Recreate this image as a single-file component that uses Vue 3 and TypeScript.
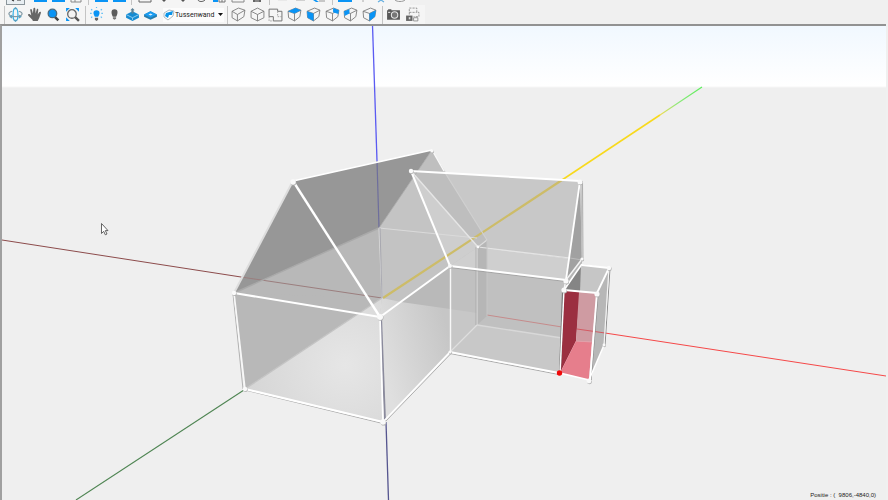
<script setup lang="ts">
import { ref } from 'vue'

interface Shape {
  d: string
  fill?: string
  stroke?: string
  width?: number
  dash?: string
}
interface Tool {
  label: string
  shapes: Shape[]
}
interface Stub extends Tool {
  w: number
}
interface Face {
  points: string
  fill: string
}
interface Line {
  from: [number, number]
  to: [number, number]
  stroke: string
  width: number
}

const blue = '#0a94f5'
const dark = '#555555'
const line = '#777777'

const cube = 'M1 4 8 1 13 3 7 6ZM1 4 1.500 10 7 13 12 9 13 3M7 6V13'
const cubeTool = (label: string, d: string): Tool => ({
  label,
  shapes: [
    { d: cube, stroke: line, width: 0.8 },
    { d, fill: blue },
  ],
})

const navigation: Tool[] = [
  {
    label: 'Draaien',
    shapes: [
      { d: 'M7 1C4 1 4 13 7 13S10 1 7 1', stroke: '#2fb0e8', width: 1.1 },
      { d: 'M4 4C-1 5 0 9 7 9S15 5 10 4', stroke: '#8299a5', width: 1.1 },
      { d: 'M5 2 7 0 9 2ZM5 12 7 14 9 12ZM1 9 4 7 4 11ZM13 9 10 7 10 11Z', fill: '#5e9fbe' },
    ],
  },
  {
    label: 'Verschuiven',
    shapes: [{
      d: 'M5 12 1.500 8.500C0 7 1.500 6 3 7L4 8 3 3C3 1.500 4.500 1.500 4.700 3L5.500 6 6 1.500C6 .3 7.700 .3 7.700 1.500L8 6 9 2.500C9.300 1.200 10.700 1.500 10.500 3L10 7 11.300 5C12 4 13.300 4.500 13 5.500L11.500 10 10 13H5.500Z',
      fill: '#666666',
    }],
  },
  {
    label: 'Zoomen',
    shapes: [
      { d: 'M8 9 11.500 12.500', stroke: '#444444', width: 2.4 },
      { d: 'M6 2A4 4 0 1 0 6 10A4 4 0 1 0 6 2', fill: blue, stroke: '#4b6c80', width: 1.2 },
    ],
  },
  {
    label: 'Alles tonen',
    shapes: [
      { d: 'M1 1H4.500L1 4.500ZM13 1V4.500L9.500 1ZM1 13V9.500L4.500 13Z', fill: blue },
      { d: 'M9 9 13 13', stroke: '#555555', width: 2.2 },
      { d: 'M6.500 2.500A4 4 0 1 0 6.500 10.500A4 4 0 1 0 6.500 2.500', fill: '#f3f3f3', stroke: '#666666', width: 1.2 },
    ],
  },
]

const display: Tool[] = [
  {
    label: 'Licht aan',
    shapes: [
      { d: 'M7 3C3 3 4 7 5.500 9H8.500C10 7 11 3 7 3', fill: blue },
      { d: 'M7 0V1M2 2 3 3M12 2 11 3M1 6H2.500M11.500 6H13M2 10 3 9M12 10 11 9', stroke: '#63bff5', width: 1.1 },
      { d: 'M5.500 10H8.500V12L7 13 5.500 12Z', fill: '#666666' },
    ],
  },
  {
    label: 'Licht uit',
    shapes: [
      { d: 'M7 2C3 2 4 6.500 5.500 9H8.500C10 6.500 11 2 7 2', fill: '#5c5c5c' },
      { d: 'M5.500 9.500H8.500V11L7 12 5.500 11Z', fill: '#777777' },
    ],
  },
  {
    label: 'Verdieping boven',
    shapes: [
      { d: 'M1 7 7 4 13 7V10L7 13 1 10Z', fill: '#168bd2' },
      { d: 'M1 7 7 10 13 7M7 10V12', stroke: '#8dccf0', width: 0.9 },
      { d: 'M6 3H5L7 1 9 3H8V6H6Z', fill: '#5d8398' },
    ],
  },
  {
    label: 'Verdieping',
    shapes: [
      { d: 'M1 7 7 4 13 7V9L7 12 1 9Z', fill: '#257cad' },
      { d: 'M1 7 7 10 13 7 7 4Z', fill: '#199bf0' },
      { d: 'M5 7 7 6 9 7 7 8Z', fill: '#d7eefb' },
    ],
  },
]

const views: Tool[] = [
  { label: 'Perspectief', shapes: [{ d: 'M1 4 7 1 13 3 12 9 6 13 1 10ZM1 4 6 7 13 3M6 7V13', stroke: line, width: 0.8 }] },
  { label: 'Isometrisch', shapes: [{ d: 'M1 4 7 1 13 4V10L7 13 1 10ZM1 4 7 7 13 4M7 7V13', stroke: line, width: 0.8 }] },
  {
    label: 'Plattegrond',
    shapes: [
      { d: 'M1 9V2H9V4H13V13H5V9Z', stroke: '#707070', width: 0.9 },
      { d: 'M1 9V13H5M9 4V9H13', stroke: '#999999', width: 0.8, dash: '1.5 1' },
    ],
  },
  cubeTool('Bovenaanzicht', 'M1 4 8 1 13 3 7 6Z'),
  cubeTool('Vooraanzicht', 'M1 4 7 6V13L1.500 10Z'),
  cubeTool('Achteraanzicht', 'M7.500 2 8 1 13 3 12.500 6.500 7.500 5Z'),
  cubeTool('Linkeraanzicht', 'M1 4 6 2V6L1.500 8.500Z'),
  cubeTool('Rechteraanzicht', 'M7 6 13 3 12 9 7 13Z'),
]

const capture: Tool[] = [
  {
    label: 'Foto',
    shapes: [
      { d: 'M1 3H2V2H5V3H13V12H1Z', fill: '#595959' },
      { d: 'M8 4.500A3 3 0 1 0 8 10.500A3 3 0 1 0 8 4.500', fill: '#777777', stroke: '#e4e4e4', width: 1 },
      { d: 'M2 5H4', stroke: '#e4e4e4', width: 1 },
    ],
  },
  {
    label: 'Foto van plattegrond',
    shapes: [
      { d: 'M4 7V1H11V5H13V9H8M4 5H11', stroke: '#888888', width: 0.8, dash: '2 1' },
      { d: 'M1 8H7V13H1Z', fill: '#666666' },
      { d: 'M3.500 9.500H5V11.500H3.500Z', fill: '#dddddd' },
      { d: 'M8 10H12V13H8Z', stroke: '#888888', width: 0.8 },
    ],
  },
]

// Visible lower edges of the scrolled toolbar row.
const upper: Stub[][] = [
  [
    { label: 'Selecteren', w: 19, shapes: [{ d: 'M3 0 5 1M8 0H12', stroke: '#333333', width: 1.2 }] },
    { label: 'Openen', w: 18, shapes: [{ d: 'M1 0H14V2H1Z', fill: blue }] },
    { label: 'Opslaan', w: 18, shapes: [{ d: 'M1 0H14V2H1Z', fill: blue }] },
    { label: 'Afdrukken', w: 18, shapes: [{ d: 'M2 0V2H12V0M6 0V2', stroke: '#888888', width: 1 }] },
  ],
  [
    { label: 'Ongedaan maken', w: 18, shapes: [{ d: 'M1 0H14V2H1Z', fill: blue }] },
    { label: 'Opnieuw', w: 18, shapes: [{ d: 'M1 0H14V2H1Z', fill: blue }] },
  ],
  [
    { label: 'Vlak', w: 20, shapes: [{ d: 'M1 0V2H13V0', stroke: '#666666', width: 1 }] },
    { label: 'Omlaag', w: 18, shapes: [{ d: 'M5 0 7 2 9 0', fill: dark }] },
    { label: 'Verlagen', w: 19, shapes: [{ d: 'M5 0 7 2 9 0', fill: dark }] },
    { label: 'Roteren', w: 18, shapes: [{ d: 'M4 0C5 2 9 2 11 0', stroke: '#555555', width: 1 }] },
    { label: 'Spiegelen', w: 19, shapes: [{ d: 'M0 0H5V2H0Z', fill: blue }, { d: 'M6 0V2H12V0M9 0V2', stroke: '#777777', width: 1 }] },
    { label: 'Kader', w: 18, shapes: [{ d: 'M1 0V2H13V0', stroke: '#888888', width: 1 }] },
    { label: 'Verwijderen', w: 19, shapes: [{ d: 'M3 0H11V2H3Z', fill: '#666666' }, { d: 'M6 0V2M8 0V2', stroke: '#cccccc', width: 0.7 }] },
  ],
  [
    { label: 'Knippen', w: 18, shapes: [{ d: 'M3 0H12', stroke: '#dddddd', width: 1 }] },
    { label: 'Plakken', w: 18, shapes: [{ d: 'M3 0H12', stroke: '#d0d0d0', width: 2 }] },
    { label: 'Meten', w: 20, shapes: [{ d: 'M1 0H4L7 2 4 2Z', fill: blue }, { d: 'M7 1H13', stroke: '#999999', width: 1 }] },
  ],
  [
    { label: 'Raster', w: 18, shapes: [{ d: 'M0 0H14V2H0Z', fill: blue }] },
    { label: 'Punt', w: 18, shapes: [{ d: 'M7 0V2', stroke: '#aaaaaa', width: 1 }] },
    { label: 'Snappen', w: 18, shapes: [{ d: 'M4 2 7 0 10 2', stroke: '#63aee0', width: 1.2 }] },
    { label: 'Cirkel', w: 20, shapes: [{ d: 'M2 0C4 2 10 2 12 0', stroke: '#999999', width: 1 }] },
  ],
]

const wallType = ref<string>('Tussenwand')
const wallTypes: string[] = ['Tussenwand', 'Buitenwand', 'Dak', 'Vloer']

const faces: Face[] = [
  { points: '379,228 432,150 487,240 477,247 477,325 382,298', fill: '#c4c4c4' },
  { points: '293,181 432,150 379,228 234,293', fill: '#979797' },
  { points: '234,293 379,228 382,298 245,389', fill: '#b8b8b8' },
  { points: '379,228 477,240 477,247 450,266 382,312', fill: '#c3c3c3' },
  { points: '411,171 418,171 432,150 444,171', fill: '#bfbfbf' },
  { points: '234,293 380,317 382,298', fill: '#b8b8b8' },
  { points: '245,389 382,298 380,317 383,422', fill: 'url(#floor-left)' },
  { points: '380,317 450,266 450,352 383,422', fill: '#b9b9b9' },
  { points: '382,298 401,302 450,309 450,352 383,422 380,317', fill: 'url(#floor-right)' },
  { points: '411,171 478,247 450,266', fill: '#cecece' },
  { points: '411,171 580,181 572,238 570,259 478,247', fill: '#c8c8c8' },
  { points: '411,171 444,172 487,240 478,247', fill: '#bebebe' },
  { points: '450,266 478,247 570,259 566,280', fill: '#cfcfcf' },
  { points: '450,266 566,280 560,373 450,352', fill: '#c0c0c0' },
  { points: '450,266 477,270 477,325 450,352', fill: '#c7c7c7' },
  { points: '450,266 477,269 477,313 450,309', fill: '#c0c0c0' },
  { points: '477,247 487,240 487,316 477,325', fill: '#b6b6b6' },
  { points: '450,352 477,325 562,338 560,373', fill: '#c8c8c8' },
  { points: '580,181 582,260 566,280', fill: '#a1a1a1' },
  { points: '566,280 582,260 582,264 564,290', fill: '#b5b5b5' },
  { points: '564,290 582,264 609,268 597,293', fill: '#c6c6c6' },
  { points: '565,290 581,265 580,292', fill: '#858585' },
  { points: '597,293 609,268 604,345 589,380', fill: '#b7b7b7' },
  { points: '564,290 580,292 576,341 560,373', fill: '#9b2f40' },
  { points: '579,292 597,293 592,342 576,341', fill: '#cf9ba2' },
  { points: '576,341 592,342 589,380 560,373', fill: '#e67e8c' },
]

const lines: Line[] = [
  { from: [2, 240], to: [241, 277], stroke: '#8c4b4b', width: 1 },
  { from: [241, 277], to: [382, 298], stroke: '#9b7e7e', width: 1 },
  { from: [487, 315], to: [562, 327], stroke: '#c58b8b', width: 1 },
  { from: [577, 329], to: [605, 333], stroke: '#d45a62', width: 1 },
  { from: [605, 333], to: [886, 376], stroke: '#f54848', width: 1 },
  { from: [372.5, 25], to: [377, 161], stroke: '#5a5af2', width: 1.3 },
  { from: [377, 161], to: [379, 228], stroke: '#6e6e9d', width: 1.2 },
  { from: [386, 422], to: [388.5, 500], stroke: '#55558f', width: 1.3 },
  { from: [76, 500], to: [244, 390], stroke: '#4f8553', width: 1.1 },
  { from: [562, 180], to: [383, 298], stroke: '#cdbc68', width: 2.2 },
  { from: [660, 115], to: [562, 180], stroke: '#f8d91c', width: 1.5 },
  { from: [702, 87], to: [660, 115], stroke: 'url(#far-axis)', width: 1.2 },
  // Edges seen through the model
  { from: [234, 293], to: [379, 228], stroke: '#a9a9a9', width: 1.4 },
  { from: [379, 228], to: [432, 150], stroke: '#aaaaaa', width: 0.8 },
  { from: [379, 228], to: [477, 238], stroke: '#dadada', width: 1.2 },
  { from: [379, 228], to: [382, 298], stroke: '#d6d6d6', width: 1.2 },
  { from: [380, 228], to: [382, 298], stroke: '#9999a5', width: 0.7 },
  { from: [245, 389], to: [382, 298], stroke: '#c4c4c4', width: 1.4 },
  { from: [411, 171], to: [478, 247], stroke: '#e6e6e6', width: 1.4 },
  { from: [444, 171], to: [487, 240], stroke: '#d0d0d0', width: 1.2 },
  { from: [478, 247], to: [487, 240], stroke: '#dddddd', width: 1.2 },
  { from: [478, 247], to: [570, 258], stroke: '#e4e4e4', width: 1.2 },
  { from: [570, 258], to: [582, 260], stroke: '#bbbbbb', width: 1 },
  { from: [477, 247], to: [477, 325], stroke: '#dadada', width: 1.2 },
  { from: [476, 247], to: [476, 325], stroke: '#a4a4a4', width: 0.7 },
  { from: [487, 240], to: [487, 316], stroke: '#c6c6c6', width: 1 },
  { from: [477, 325], to: [450, 352], stroke: '#dedede', width: 1.3 },
  { from: [477, 325], to: [562, 338], stroke: '#d8d8d8', width: 1.3 },
  { from: [576, 341], to: [592, 342], stroke: '#e0a1aa', width: 1 },
  // Dark companions of the outer edges
  { from: [233, 294], to: [243, 389], stroke: '#aaaaaa', width: 0.9 },
  { from: [245, 390], to: [383, 423.5], stroke: '#999999', width: 0.8 },
  { from: [381, 317], to: [385, 422], stroke: '#8a8a9c', width: 2 },
  { from: [385, 422], to: [451, 353.5], stroke: '#9d9d9d', width: 0.8 },
  { from: [450, 353.5], to: [559, 374.5], stroke: '#999999', width: 0.8 },
  { from: [450, 267.5], to: [566, 281.5], stroke: '#999999', width: 0.7 },
  { from: [563, 290], to: [560, 373], stroke: '#777777', width: 2 },
  { from: [598, 293], to: [591, 380], stroke: '#888888', width: 1.2 },
  { from: [610, 268], to: [605, 345], stroke: '#888888', width: 1 },
  { from: [582.5, 181], to: [583, 260], stroke: '#999999', width: 0.8 },
  // Outer edges
  { from: [293, 181], to: [432, 150], stroke: '#ffffff', width: 1.6 },
  { from: [432, 150], to: [444, 171], stroke: '#f9f9f9', width: 1.5 },
  { from: [293, 181], to: [234, 293], stroke: '#dddddd', width: 2 },
  { from: [293, 181], to: [380, 317], stroke: '#ffffff', width: 2.4 },
  { from: [234, 293], to: [380, 317], stroke: '#ffffff', width: 2 },
  { from: [234, 293], to: [245, 389], stroke: '#f8f8f8', width: 1.6 },
  { from: [245, 389], to: [383, 422], stroke: '#ffffff', width: 2 },
  { from: [380, 317], to: [383, 422], stroke: '#ffffff', width: 1.7 },
  { from: [380, 317], to: [450, 266], stroke: '#ffffff', width: 2 },
  { from: [383, 422], to: [450, 352], stroke: '#ffffff', width: 1.8 },
  { from: [450.5, 266], to: [450.5, 352], stroke: '#f7f7f7', width: 1.4 },
  { from: [411, 171], to: [450, 266], stroke: '#ffffff', width: 2 },
  { from: [411, 171], to: [580, 181], stroke: '#ffffff', width: 2 },
  { from: [580, 181], to: [566, 280], stroke: '#ffffff', width: 1.8 },
  { from: [581, 181], to: [582, 260], stroke: '#bdbdbd', width: 1.2 },
  { from: [450, 266], to: [566, 280], stroke: '#ffffff', width: 2 },
  { from: [566, 280], to: [582, 259], stroke: '#f4f4f4', width: 1.4 },
  { from: [566, 280], to: [564, 290], stroke: '#f8f8f8', width: 1.5 },
  { from: [450, 352], to: [559, 373], stroke: '#ffffff', width: 1.8 },
  { from: [564, 290], to: [582, 264], stroke: '#ffffff', width: 1.6 },
  { from: [582, 265], to: [609, 268], stroke: '#ffffff', width: 1.8 },
  { from: [609, 268], to: [597, 293], stroke: '#ffffff', width: 1.8 },
  { from: [564, 290], to: [597, 293], stroke: '#ffffff', width: 2 },
  { from: [564, 290], to: [560, 373], stroke: '#ffffff', width: 1.4 },
  { from: [597, 293], to: [590, 380], stroke: '#ffffff', width: 2 },
  { from: [609, 268], to: [604, 345], stroke: '#f4f4f4', width: 1.2 },
  { from: [604, 345], to: [589, 380], stroke: '#ffffff', width: 1.5 },
  { from: [560, 373], to: [589, 380], stroke: '#ffffff', width: 1.8 },
]

const nodes: [number, number, number][] = [
  [293, 182, 2.8], [432, 151, 1.6], [234, 293, 2.2], [380, 317, 3], [245, 389, 2.2],
  [383, 422, 2.8], [450, 266, 2], [411, 171, 2.2], [580, 182, 2.5], [566, 281, 2.6],
  [564, 290, 2.6], [597, 294, 2.6], [609, 268, 2.2], [589, 381, 2.4], [582, 259, 1.6],
  [450, 352, 1.6], [478, 247, 1.4], [604, 345, 1.4],
]

const position: [number, number, number] = [9806, -4840, 0]
</script>

<template>
  <main class="app">
    <header class="toolbars">
      <div class="row upper">
        <div v-for="(group, g) in upper" :key="g" class="stubs">
          <button
            v-for="tool in group"
            :key="tool.label"
            type="button"
            class="stub"
            :class="{ active: tool.label === 'Selecteren' }"
            :aria-label="tool.label"
            :style="{ width: tool.w + 'px' }"
          >
            <svg viewBox="0 0 14 4" width="14" height="4" aria-hidden="true">
              <path
                v-for="(s, i) in tool.shapes" :key="i" :d="s.d"
                :fill="s.fill ?? 'none'" :stroke="s.stroke ?? 'none'" :stroke-width="s.width ?? 0"
              />
            </svg>
          </button>
        </div>
      </div>
      <div class="row lower">
        <div
          v-for="(group, g) in [navigation, display]" :key="g" class="group"
          :class="g === 0 ? 'navigation' : 'display'"
        >
          <button v-for="tool in group" :key="tool.label" type="button" class="tool" :aria-label="tool.label">
            <svg viewBox="0 0 14 14" width="15" height="15" aria-hidden="true">
              <path
                v-for="(s, i) in tool.shapes" :key="i" :d="s.d" :fill="s.fill ?? 'none'"
                :stroke="s.stroke ?? 'none'" :stroke-width="s.width ?? 0" :stroke-dasharray="s.dash"
              />
            </svg>
          </button>
        </div>
        <label class="wall">
          <svg viewBox="0 0 12 12" width="12" height="12" aria-hidden="true">
            <path d="M1 4 6 1 11 2 10 7 5 11 1 8Z" fill="#fff" stroke="#9aa9b2" stroke-width="0.800" />
            <path d="M3 4 10 2 9 6 6 6 5 9 2 7Z" fill="#0a94e8" />
          </svg>
          <select v-model="wallType" aria-label="Type wand">
            <option v-for="type in wallTypes" :key="type">{{ type }}</option>
          </select>
          <svg viewBox="0 0 6 4" width="6" height="4" aria-hidden="true">
            <path d="M0 0H5L2.500 3Z" fill="#111" />
          </svg>
        </label>
        <div v-for="(group, g) in [views, capture]" :key="g" class="group" :class="g === 0 ? 'views' : 'capture'">
          <button v-for="tool in group" :key="tool.label" type="button" class="tool" :aria-label="tool.label">
            <svg viewBox="0 0 14 14" width="15" height="15" aria-hidden="true">
              <path
                v-for="(s, i) in tool.shapes" :key="i" :d="s.d" :fill="s.fill ?? 'none'"
                :stroke="s.stroke ?? 'none'" :stroke-width="s.width ?? 0" :stroke-dasharray="s.dash"
              />
            </svg>
          </button>
        </div>
      </div>
    </header>

    <section class="viewport">
      <svg class="scene" viewBox="2 26 884 474" preserveAspectRatio="xMidYMid meet" role="img" aria-label="3D-model">
        <defs>
          <radialGradient id="floor-left" gradientUnits="userSpaceOnUse" cx="345" cy="365" r="120">
            <stop offset="0" stop-color="#e6e6e6" />
            <stop offset="1" stop-color="#d2d2d2" />
          </radialGradient>
          <linearGradient id="floor-right" gradientUnits="userSpaceOnUse" x1="382" y1="365" x2="452" y2="345">
            <stop offset="0" stop-color="#dfdfdf" />
            <stop offset="1" stop-color="#c6c6c6" />
          </linearGradient>
          <linearGradient id="far-axis" gradientUnits="userSpaceOnUse" x1="702" y1="87" x2="660" y2="115">
            <stop offset="0" stop-color="#58ee58" />
            <stop offset="0.6" stop-color="#8fe87a" />
            <stop offset="1" stop-color="#f0dc50" />
          </linearGradient>
        </defs>
        <polygon v-for="(f, i) in faces" :key="'f' + i" :points="f.points" :fill="f.fill" />
        <line
          v-for="(l, i) in lines" :key="'l' + i" :x1="l.from[0]" :y1="l.from[1]" :x2="l.to[0]" :y2="l.to[1]"
          :stroke="l.stroke" :stroke-width="l.width"
        />
        <g v-for="([x, y, r], i) in nodes" :key="'n' + i">
          <circle :cx="x + 0.5" :cy="y + 0.8" :r="r" fill="#b0b0b0" />
          <circle :cx="x" :cy="y" :r="r" fill="#fafafa" />
        </g>
        <circle cx="559.500" cy="373" r="2.700" fill="#f00808" />
        <path
          d="M101.500 223.500V233.500L103.700 231.300 105.300 234.800 107 234 105.300 230.600H108Z"
          fill="#fff" stroke="#555" stroke-width="0.900"
        />
      </svg>
      <output class="position">Positie : (&nbsp; {{ position[0] }},{{ position[1] }},{{ position[2] }})</output>
    </section>
  </main>
</template>

<style>
body {
  margin: 0;
}
</style>

<style scoped>
.app {
  display: flex;
  flex-direction: column;
  height: 100vh;
  overflow: hidden;
  background: #f0f0f0;
}
.toolbars {
  flex: none;
  background: #f0f0f0;
}
.row {
  display: flex;
  width: fit-content;
  background: #f5f5f5;
}
.upper {
  height: 5px;
  padding-left: 6px;
}
.lower {
  height: 19px;
  align-items: center;
  padding-left: 4px;
}
.stubs {
  display: flex;
}
.stubs + .stubs {
  margin-left: 3px;
  padding-left: 3px;
  border-left: 1px solid #c4c4c4;
}
button {
  display: flex;
  justify-content: center;
  align-items: center;
  padding: 0;
  border: 0;
  background: none;
}
.stub {
  box-sizing: border-box;
  height: 5px;
  align-items: flex-start;
}
.stub.active {
  margin-right: 6px;
  border: 1px solid #8b959b;
  border-top: 0;
  background: #e8eef2;
}
.group {
  display: grid;
  grid-auto-flow: column;
  grid-auto-columns: 1fr;
  padding: 0 3px 0 1px;
  border-left: 1px solid #c4c4c4;
}
.navigation {
  width: 76px;
}
.display {
  width: 73px;
}
.views {
  width: 150px;
}
.capture {
  width: 38px;
}
.tool {
  height: 18px;
  min-width: 0;
}
svg {
  display: block;
  flex: none;
}
.wall {
  display: flex;
  align-items: center;
  box-sizing: border-box;
  width: 61px;
  height: 14px;
  margin-right: 3px;
  background: #fcfcfc;
}
.wall select {
  appearance: none;
  flex: 1;
  min-width: 0;
  height: 14px;
  padding: 0;
  border: 0;
  background: none;
  color: #222;
  font: 7px/14px Roboto, "Noto Sans", sans-serif;
}
.viewport {
  position: relative;
  flex: 1;
  min-height: 0;
  margin-right: 2px;
  border-top: 2px solid #929292;
  border-left: 2px solid #a0a0a0;
  background: linear-gradient(#f1f8ff 0, #ffffff 60px, #efefef 62px);
}
.scene {
  width: 100%;
  height: 100%;
}
.position {
  position: absolute;
  right: 10px;
  bottom: 0;
  color: #222;
  font: 6px/10px "Liberation Sans", Arial, sans-serif;
}
</style>
